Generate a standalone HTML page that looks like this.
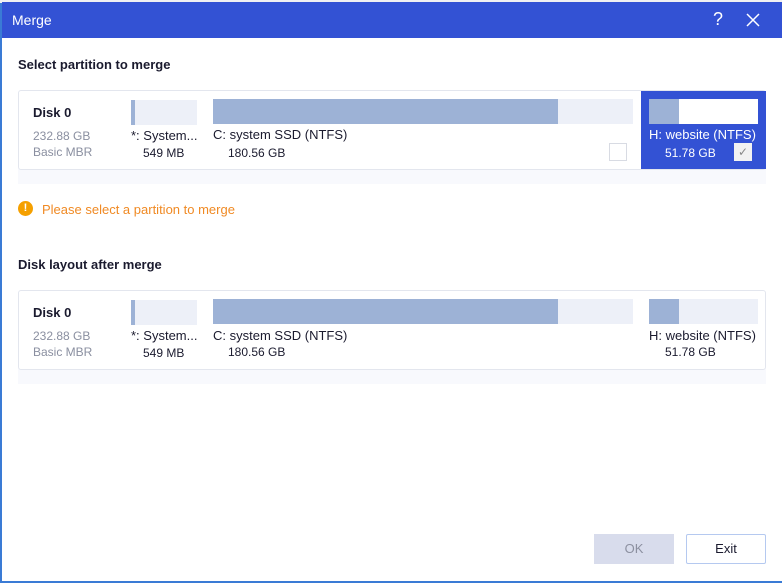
<!DOCTYPE html>
<html><head><style>
*{margin:0;padding:0;box-sizing:border-box}
body{width:782px;height:583px;background:#fff;font-family:"Liberation Sans",sans-serif;position:relative;overflow:hidden}
.a{position:absolute}
.t{font-size:13px;color:#1a1a2e;white-space:nowrap}
.g{font-size:12px;color:#8a8fa0;white-space:nowrap}
.b{font-weight:bold}
</style></head><body>
<div class="a" style="left:0;top:0;width:782px;height:3px;background:#f0f0f2"></div>
<div class="a" style="left:0;top:3px;width:2px;height:580px;background:#3a7bd5"></div>
<div class="a" style="left:0;top:581px;width:782px;height:2px;background:#3a7bd5"></div>
<div class="a" style="left:2px;top:2px;width:780px;height:36px;background:#3352d4"></div>
<div class="a" style="left:12px;top:12px;color:#fff;font-size:14px">Merge</div>
<div class="a" style="left:713px;top:9px;color:#fff;font-size:18px">?</div>
<svg class="a" style="left:746px;top:13px" width="14" height="14" viewBox="0 0 14 14"><path d="M1 1L13 13M13 1L1 13" stroke="#fff" stroke-width="1.5"/></svg>

<div class="a t b" style="left:18px;top:57px">Select partition to merge</div>
<div class="a" style="left:18px;top:168px;width:748px;height:16px;background:#f8f9fd"></div>
<div class="a" style="left:18px;top:90px;width:748px;height:80px;border:1px solid #e3e6ee;border-radius:3px;background:#fff"></div>
<div class="a" style="left:641px;top:91px;width:125px;height:78px;background:#3352d4"></div>
<div class="a t b" style="left:33px;top:105px">Disk 0</div>
<div class="a g" style="left:33px;top:129px">232.88 GB</div>
<div class="a g" style="left:33px;top:145px">Basic MBR</div>
<div class="a" style="left:131px;top:100px;width:66px;height:25px;background:#edf0f8"></div>
<div class="a" style="left:131px;top:100px;width:4px;height:25px;background:#9db2d6"></div>
<div class="a t" style="left:131px;top:128px">*: System...</div>
<div class="a t" style="left:143px;top:146px;font-size:12px">549 MB</div>
<div class="a" style="left:213px;top:99px;width:420px;height:25px;background:#edf0f8"></div>
<div class="a" style="left:213px;top:99px;width:345px;height:25px;background:#9db2d6"></div>
<div class="a t" style="left:213px;top:127px">C: system SSD (NTFS)</div>
<div class="a t" style="left:228px;top:146px;font-size:12px">180.56 GB</div>
<div class="a" style="left:609px;top:143px;width:18px;height:18px;border:1px solid #d8dbe3;background:#fff"></div>
<div class="a" style="left:649px;top:99px;width:109px;height:25px;background:#fff"></div>
<div class="a" style="left:649px;top:99px;width:30px;height:25px;background:#9db2d6"></div>
<div class="a t" style="left:649px;top:127px;color:#fff;width:110px;overflow:hidden">H: website (NTFS)</div>
<div class="a t" style="left:665px;top:146px;color:#fff;font-size:12px">51.78 GB</div>
<div class="a" style="left:734px;top:143px;width:18px;height:18px;background:#f2f2f2;color:#888;font-size:12px;text-align:center;line-height:18px">✓</div>

<div class="a" style="left:18px;top:201px;width:15px;height:15px;border-radius:50%;background:#f5a000;color:#fff;font-size:11px;font-weight:bold;text-align:center;line-height:15px">!</div>
<div class="a" style="left:42px;top:202px;font-size:13px;color:#f08a24">Please select a partition to merge</div>

<div class="a t b" style="left:18px;top:257px">Disk layout after merge</div>
<div class="a" style="left:18px;top:368px;width:748px;height:16px;background:#f8f9fd"></div>
<div class="a" style="left:18px;top:290px;width:748px;height:80px;border:1px solid #e3e6ee;border-radius:3px;background:#fff"></div>
<div class="a t b" style="left:33px;top:305px">Disk 0</div>
<div class="a g" style="left:33px;top:329px">232.88 GB</div>
<div class="a g" style="left:33px;top:345px">Basic MBR</div>
<div class="a" style="left:131px;top:300px;width:66px;height:25px;background:#edf0f8"></div>
<div class="a" style="left:131px;top:300px;width:4px;height:25px;background:#9db2d6"></div>
<div class="a t" style="left:131px;top:328px">*: System...</div>
<div class="a t" style="left:143px;top:346px;font-size:12px">549 MB</div>
<div class="a" style="left:213px;top:299px;width:420px;height:25px;background:#edf0f8"></div>
<div class="a" style="left:213px;top:299px;width:345px;height:25px;background:#9db2d6"></div>
<div class="a t" style="left:213px;top:328px">C: system SSD (NTFS)</div>
<div class="a t" style="left:228px;top:345px;font-size:12px">180.56 GB</div>
<div class="a" style="left:649px;top:299px;width:109px;height:25px;background:#edf0f8"></div>
<div class="a" style="left:649px;top:299px;width:30px;height:25px;background:#9db2d6"></div>
<div class="a t" style="left:649px;top:328px;width:110px;overflow:hidden">H: website (NTFS)</div>
<div class="a t" style="left:665px;top:345px;font-size:12px">51.78 GB</div>

<div class="a" style="left:594px;top:534px;width:80px;height:30px;background:#d8dcec;color:#8c90a0;font-size:13px;text-align:center;line-height:30px">OK</div>
<div class="a" style="left:686px;top:534px;width:80px;height:30px;border:1px solid #b5c9f0;border-radius:2px;background:#fff;color:#1a1a2e;font-size:13px;text-align:center;line-height:28px">Exit</div>
</body></html>
